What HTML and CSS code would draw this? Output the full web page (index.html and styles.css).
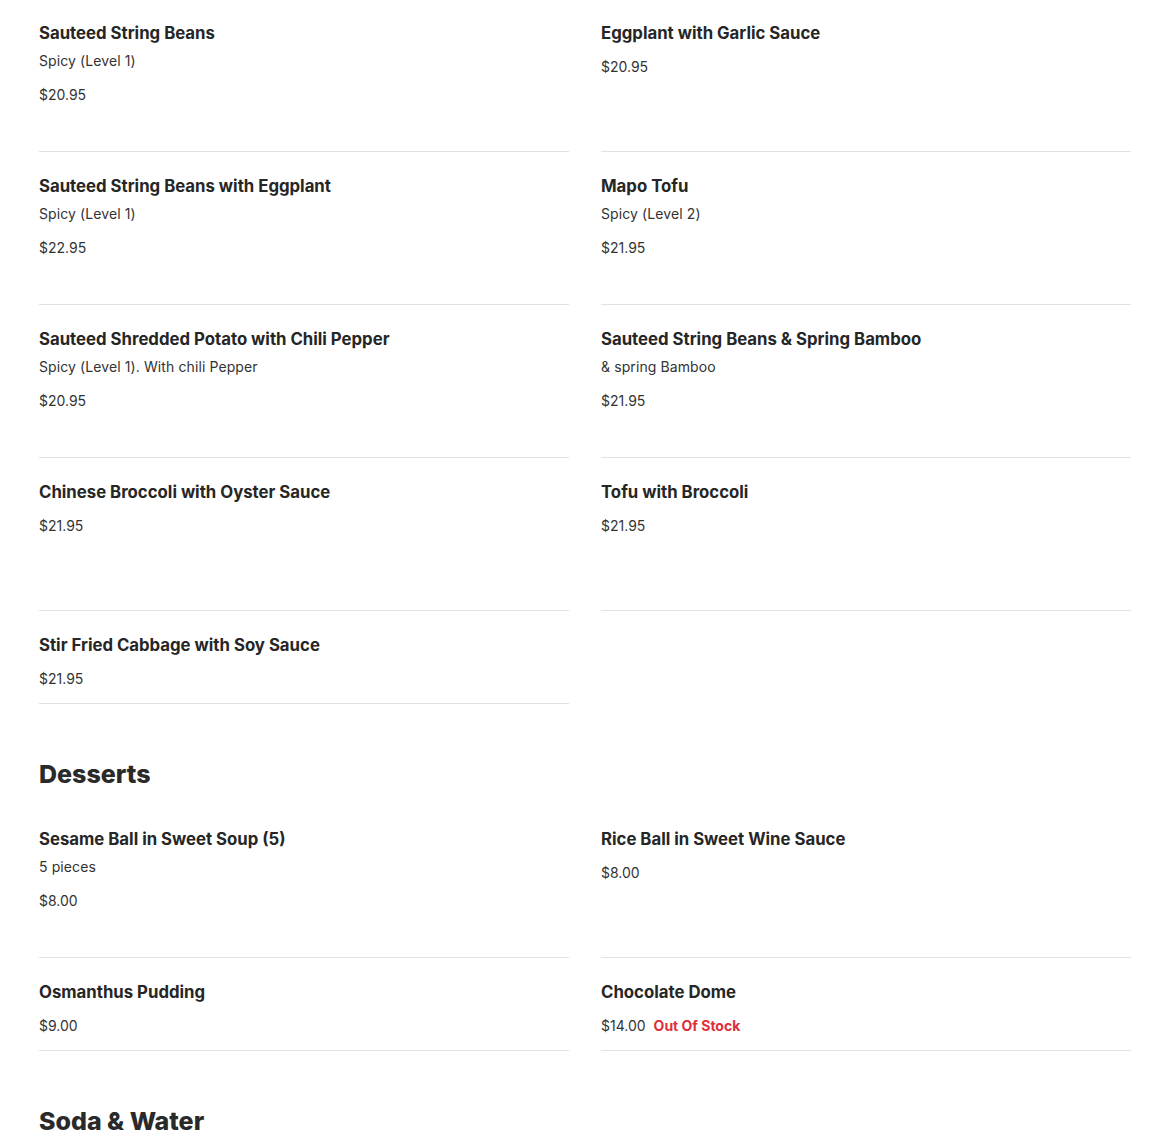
FILE: index.html
```html
<!DOCTYPE html>
<html lang="en">
<head>
<meta charset="utf-8">
<title>Menu</title>
<link rel="stylesheet" href="styles.css">
</head>
<body>
<main class="menu">
  <section class="section section--first">
    <div class="grid">
      <div class="item">
        <h3 class="item__title">Sauteed String Beans</h3>
        <p class="item__desc">Spicy (Level 1)</p>
        <div class="item__price">$20.95</div>
      </div>
      <div class="item">
        <h3 class="item__title">Eggplant with Garlic Sauce</h3>
        <div class="item__price">$20.95</div>
      </div>
      <div class="item">
        <h3 class="item__title">Sauteed String Beans with Eggplant</h3>
        <p class="item__desc">Spicy (Level 1)</p>
        <div class="item__price">$22.95</div>
      </div>
      <div class="item">
        <h3 class="item__title">Mapo Tofu</h3>
        <p class="item__desc">Spicy (Level 2)</p>
        <div class="item__price">$21.95</div>
      </div>
      <div class="item">
        <h3 class="item__title">Sauteed Shredded Potato with Chili Pepper</h3>
        <p class="item__desc">Spicy (Level 1). With chili Pepper</p>
        <div class="item__price">$20.95</div>
      </div>
      <div class="item">
        <h3 class="item__title">Sauteed String Beans &amp; Spring Bamboo</h3>
        <p class="item__desc">&amp; spring Bamboo</p>
        <div class="item__price">$21.95</div>
      </div>
      <div class="item">
        <h3 class="item__title">Chinese Broccoli with Oyster Sauce</h3>
        <div class="item__price">$21.95</div>
      </div>
      <div class="item">
        <h3 class="item__title">Tofu with Broccoli</h3>
        <div class="item__price">$21.95</div>
      </div>
      <div class="item item--short">
        <h3 class="item__title">Stir Fried Cabbage with Soy Sauce</h3>
        <div class="item__price">$21.95</div>
      </div>
    </div>
  </section>

  <section class="section">
    <h2 class="section__title">Desserts</h2>
    <div class="grid">
      <div class="item">
        <h3 class="item__title">Sesame Ball in Sweet Soup (5)</h3>
        <p class="item__desc">5 pieces</p>
        <div class="item__price">$8.00</div>
      </div>
      <div class="item">
        <h3 class="item__title">Rice Ball in Sweet Wine Sauce</h3>
        <div class="item__price">$8.00</div>
      </div>
      <div class="item item--short">
        <h3 class="item__title">Osmanthus Pudding</h3>
        <div class="item__price">$9.00</div>
      </div>
      <div class="item item--short">
        <h3 class="item__title">Chocolate Dome</h3>
        <div class="item__price">$14.00<span class="item__stock">Out Of Stock</span></div>
      </div>
    </div>
  </section>

  <section class="section">
    <h2 class="section__title">Soda &amp; Water</h2>
  </section>
</main>
</body>
</html>
```

FILE: styles.css
```css
* { box-sizing: border-box; }

html, body {
  margin: 0;
  padding: 0;
  background: #ffffff;
}

body {
  font-family: Inter, "Open Sans", sans-serif;
  color: #2a2a2a;
  overflow: hidden;
}

.menu {
  padding: 0 39px;
  margin-top: -1px;
}

.section__title {
  margin: 52px 0 13px;
  font-size: 25px;
  line-height: 36px;
  font-weight: 800;
  color: #2a2a2a;
}

.grid {
  display: grid;
  grid-template-columns: 1fr 1fr;
  column-gap: 32px;
}

.item {
  display: flex;
  flex-direction: column;
  min-height: 153px;
  padding: 20px 0 14px;
  border-bottom: 1px solid #e2e2e2;
}

.item--short {
  min-height: 0;
}

.item__title {
  margin: 0;
  font-size: 16.75px;
  line-height: 28px;
  font-weight: 700;
  color: #262626;
}

.item__desc {
  margin: 0;
  font-size: 14px;
  letter-spacing: 0.1px;
  line-height: 28px;
  color: #333333;
}

.item__price {
  margin-top: 10px;
  font-size: 14px;
  line-height: 20px;
  color: #333333;
}

.item__stock {
  margin-left: 8px;
  font-weight: 700;
  color: #de2d3b;
}
```
